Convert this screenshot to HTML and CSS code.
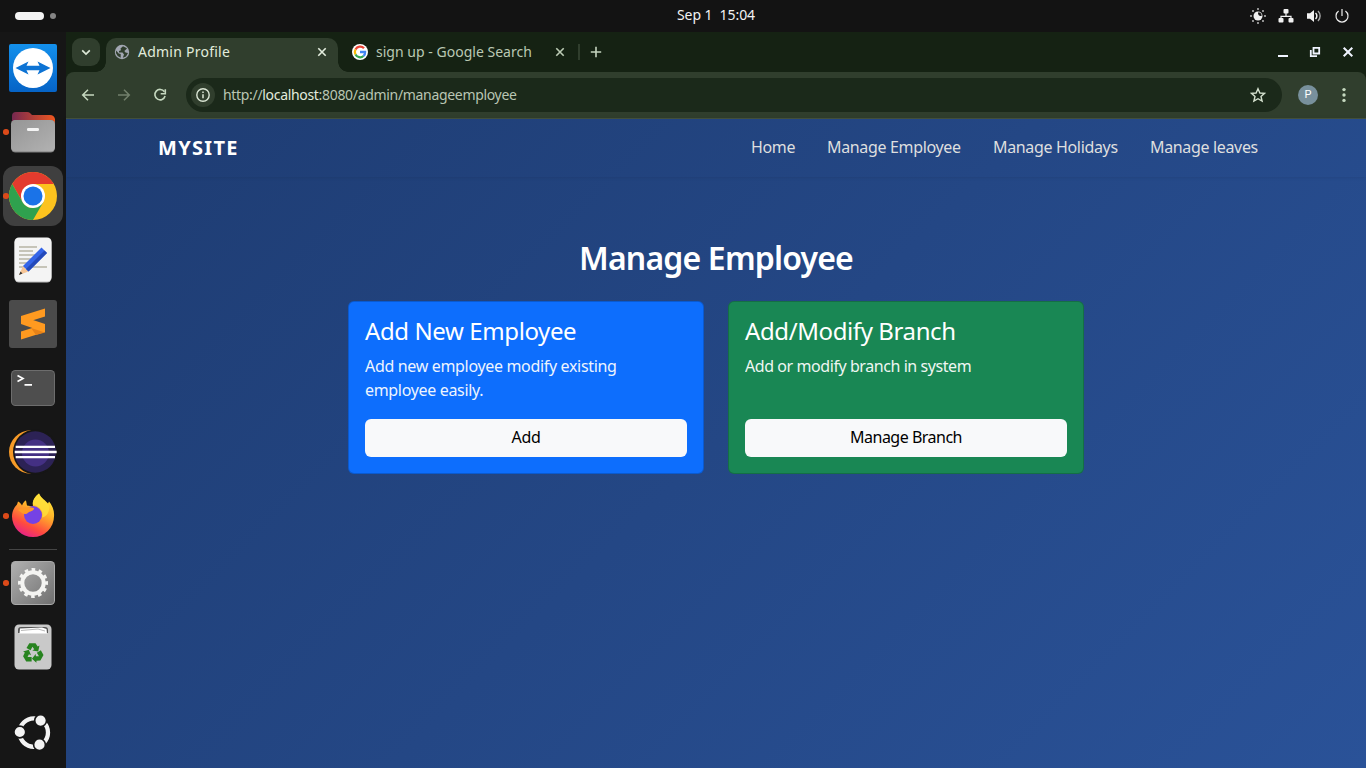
FILE: index.html
```html
<!DOCTYPE html>
<html lang="en">
<head>
<meta charset="utf-8">
<title>Admin Profile</title>
<link rel="stylesheet" href="styles.css">
</head>
<body>
<header class="topbar">
  <div class="workspaces"><span class="pill"></span><span class="ws-dot"></span></div>
  <div class="clock">Sep 1&nbsp; 15:04</div>
  <div class="status">
    <svg width="16" height="16" viewBox="0 0 16 16"><circle cx="8" cy="8" r="4.500" fill="#f0f0f0"/><path d="M8.300 4.300a2.600 2.600 0 0 0 3.400 3.500A3.800 3.800 0 0 0 8.300 4.300Z" fill="#131313"/><g fill="#ccc"><circle cx="8" cy="1" r=".9"/><circle cx="8" cy="15" r=".9"/><circle cx="1" cy="8" r=".9"/><circle cx="15" cy="8" r=".9"/><circle cx="3" cy="3" r=".9"/><circle cx="13" cy="3" r=".9"/><circle cx="3" cy="13" r=".9"/><circle cx="13" cy="13" r=".9"/></g></svg>
    <svg width="16" height="16" viewBox="0 0 16 16"><g fill="#f2f2f2"><rect x="5.500" y="1" width="5" height="4.500" rx="1"/><rect x=".5" y="10" width="5" height="4.500" rx="1"/><rect x="10.500" y="10" width="5" height="4.500" rx="1"/></g><path d="M8 5v3.300M3 10.500V8.300h10v2.200" fill="none" stroke="#f2f2f2" stroke-width="1.200"/></svg>
    <svg width="16" height="16" viewBox="0 0 16 16"><path d="M1 5.300h3L8 2v12L4 10.700H1Z" fill="#f2f2f2"/><path d="M9.500 5a4 4 0 0 1 0 6" fill="none" stroke="#f2f2f2" stroke-width="1.500"/><path d="M12 3a7 7 0 0 1 0 10" fill="none" stroke="#aaa" stroke-width="1.400"/></svg>
    <svg width="16" height="16" viewBox="0 0 16 16"><path d="M4.600 3.100a6 6 0 1 0 6.800 0M8 1v7" fill="none" stroke="#eee" stroke-width="1.200"/></svg>
  </div>
</header>
<div class="desktop">
  <aside class="dock">
    <div class="app"><svg width="48" height="48" viewBox="0 0 48 48"><defs><linearGradient id="tv" x2="0" y2="1"><stop stop-color="#1390ec"/><stop offset="1" stop-color="#0663c6"/></linearGradient></defs><rect width="48" height="48" rx="2" fill="url(#tv)"/><circle cx="24" cy="24" r="20" fill="#fff"/><path d="M6.500 24l13-6.500-2 4.300h13l-2-4.300 13 6.500-13 6.500 2-4.300h-13l2 4.300Z" fill="#0d73d4"/></svg></div>
    <div class="app"><i class="running"></i><svg width="48" height="48" viewBox="0 0 48 48"><defs><linearGradient id="ff" x2="1"><stop stop-color="#762850"/><stop offset="1" stop-color="#ef5720"/></linearGradient><linearGradient id="gr" x2="1" y2="1"><stop stop-color="#959595"/><stop offset="1" stop-color="#b2b2b2"/></linearGradient></defs><path d="M3 18V8q0-4 4-4h11q2 0 3 1l2 2h18q4 0 5 4v7Z" fill="url(#ff)"/><rect x="2" y="12" width="44" height="32.500" rx="4.500" fill="#7d7d7d"/><rect x="2" y="12" width="44" height="31.500" rx="4.500" fill="url(#gr)"/><rect x="18" y="20" width="12" height="3" rx="1.300" fill="#f4f4f4"/></svg></div>
    <div class="app active"><i class="running"></i><svg width="48" height="48" viewBox="0 0 48 48"><circle cx="24" cy="24" r="24" fill="#fcc31e"/><path d="M24 24L13.600 30 3.220 12A24 24 0 0 1 44.780 12H24Z" fill="#e33b2e"/><path d="M3.220 12L13.600 30A12 12 0 0 0 24 36L34.400 30 24 48A24 24 0 0 1 3.220 12Z" fill="#2fa14e"/><circle cx="24" cy="24" r="12" fill="#fff"/><circle cx="24" cy="24" r="9.500" fill="#1a73e8"/></svg></div>
    <div class="app"><svg width="48" height="48" viewBox="0 0 48 48"><rect x="5.500" y="2" width="37" height="44.500" rx="4.500" fill="#bdbdbd"/><rect x="5.500" y="1.500" width="37" height="44" rx="4.500" fill="#f4f4f4"/><path d="M10 11h18M10 15h14M10 19h18M10 23h15M10 27h13M10 31h28" stroke="#c6c4b8" stroke-width="2"/><path d="M10 39l4-9 5.500 5.500Z" fill="#f6c596"/><path d="M10 39l1.500-3.500 2 2Z" fill="#333"/><path d="M14 30L32.500 11.500l5.500 5.500L19.500 35.500Z" fill="#3465e8"/><path d="M17 33L35.500 14.500 38 17 19.500 35.500Z" fill="#2349b9"/></svg></div>
    <div class="app"><svg width="48" height="48" viewBox="0 0 48 48"><rect width="48" height="48" rx="3" fill="#4b4b4b"/><path d="M12 31.500L36 24v8L12 39.500Z" fill="#ff9a20"/><path d="M12 16v8l24 8.500V24Z" fill="#ff9a20"/><path d="M12 16L36 8.500v8L12 24Z" fill="#ff9a20"/><path d="M22 28l14 4.500-9 2.500Z" fill="#e58118"/></svg></div>
    <div class="app"><svg width="48" height="48" viewBox="0 0 48 48"><rect x="2" y="6" width="44" height="36" rx="4.500" fill="#6d6d6d"/><rect x="3" y="7" width="42" height="34" rx="3.500" fill="#4e4e4e"/><path d="M8.500 11.500l5.500 3-5.500 3M15.500 20.800H23" fill="none" stroke="#fff" stroke-width="1.700"/></svg></div>
    <div class="app"><svg width="48" height="48" viewBox="0 0 48 48"><circle cx="21.700" cy="24" r="21.700" fill="#f79a28"/><circle cx="26.500" cy="24" r="22.500" fill="#161616"/><circle cx="26.300" cy="24" r="20.700" fill="#2c2255"/><circle cx="26.500" cy="25" r="13.500" fill="#443083"/><path d="M6.700 18.800H46M5.700 24h42M6.700 29.100H46" stroke="#fff" stroke-width="2.300"/></svg></div>
    <div class="app"><i class="running"></i><svg width="48" height="48" viewBox="0 0 48 48"><defs><linearGradient id="fx" x1=".8" y1="0" x2=".3" y2="1"><stop stop-color="#fff13b"/><stop offset=".4" stop-color="#ffb029"/><stop offset=".75" stop-color="#ff4b3f"/><stop offset="1" stop-color="#e5208c"/></linearGradient></defs><path d="M30 1.500c2 5 7 7 9 10l1-2c4 5 5.500 10 5 15a21 20.500 0 0 1-42 0c0-5 2-9 5-12l1-3c2 1 3 2 4 4 1-3 3-5 4-5l1 5 6 1c-1-6 2-10 6-13Z" fill="url(#fx)"/><circle cx="24" cy="23" r="9" fill="#7542e5"/><path d="M9 18c4-3 8-2 11-3l5 1c0 3-3 3-5 4-2 2-4 3-7 1Z" fill="#ff9a27"/><path d="M30 1.500c-5 4-7 8-6 11 7 2 11 7 9 13 6-1 8-8 7-12-3-4-8-7-10-12Z" fill="#ffe13b" opacity=".8"/></svg></div>
    <div class="divider"></div>
    <div class="app"><i class="running"></i><svg width="48" height="48" viewBox="0 0 48 48"><defs><linearGradient id="st" x2="1" y2="1"><stop stop-color="#b0b0b0"/><stop offset="1" stop-color="#707070"/></linearGradient></defs><rect x="2" y="2" width="44" height="44" rx="4.500" fill="#aaa"/><rect x="3" y="3" width="42" height="42" rx="3.500" fill="url(#st)"/><circle cx="24" cy="24" r="13.300" fill="none" stroke="#f4f4f2" stroke-width="3.400" stroke-dasharray="3.482" transform="rotate(-7.500 24 24)"/><circle cx="24" cy="24" r="10.700" fill="none" stroke="#f4f4f2" stroke-width="4"/></svg></div>
    <div class="app"><svg width="48" height="48" viewBox="0 0 48 48"><rect x="5.500" y="1.500" width="37" height="45" rx="4.500" fill="#c9c9c9"/><path d="M9 10V7q0-3 3-3h24q3 0 3 3v3Z" fill="#555"/><path d="M10.500 10.500l.5-5 22-1 4.500 1.500.5 4.500Z" fill="#fff"/><path d="M12 7.500l17-1.500 7 2" fill="none" stroke="#999" stroke-width=".7"/><g fill="#27831f"><path d="M17.500 25l2.800-4.700h6.200l2.200 3.300 1.800-1-1.300 5.900-5.900-.9 1.900-1.300-1.700-2.600-2 3.600Z"/><path d="M17.500 25l2.800-4.700h6.200l2.200 3.300 1.800-1-1.300 5.900-5.900-.9 1.900-1.300-1.700-2.600-2 3.600Z" transform="rotate(120 24 30.300)"/><path d="M17.500 25l2.800-4.700h6.200l2.200 3.300 1.800-1-1.300 5.900-5.900-.9 1.900-1.300-1.700-2.600-2 3.600Z" transform="rotate(240 24 30.300)"/></g></svg></div>
    <div class="launcher"><svg width="48" height="48" viewBox="0 0 48 48"><circle cx="24.800" cy="23.600" r="14.200" fill="none" stroke="#f3f3f3" stroke-width="4.300"/><g fill="#f3f3f3" stroke="#161616" stroke-width="1.600"><circle cx="10.800" cy="23" r="5.900"/><circle cx="31.600" cy="11.600" r="5.900"/><circle cx="30.500" cy="35.700" r="5.900"/></g></svg></div>
  </aside>
  <main class="browser">
    <div class="tabs">
      <button class="tab-search"><svg width="12" height="12" viewBox="0 0 12 12"><path d="M2.200 4.300L6 8l3.800-3.700" fill="none" stroke="#dde8d7" stroke-width="1.700"/></svg></button>
      <div class="tab current">
        <svg width="16" height="16" viewBox="0 0 16 16"><circle cx="8" cy="8" r="7.200" fill="#a2a7b2"/><path d="M9 2.200L6.500 4.500l.5 1.800-2 .7v1.500h3.500l1.500 2-1.200 3.200 3.200-1.200 2-3.500-2.500-.500L10.300 7l1.700-1.500 1-1.300ZM2.200 6.500l2.500 3 2 .5v3.800l-3-1.800-1.800-3Z" fill="#303e2d"/></svg>
        <span class="tab-title wide">Admin Profile</span>
        <svg class="close" width="10" height="10" viewBox="0 0 10 10"><path d="M1.300 1.300l7.400 7.400M8.700 1.300L1.300 8.700" stroke="#e4eedf" stroke-width="1.600"/></svg>
      </div>
      <div class="tab other">
        <svg width="16" height="16" viewBox="0 0 16 16"><circle cx="8" cy="8" r="8" fill="#fff"/><g fill="none" stroke-width="2.300"><path d="M12 4.300A5.200 5.200 0 0 0 3.500 5.500" stroke="#ea4335"/><path d="M3.500 5.500a5.200 5.200 0 0 0 0 5" stroke="#fbbc05"/><path d="M3.500 10.500A5.200 5.200 0 0 0 11.500 12" stroke="#34a853"/><path d="M11.500 12A5 5 0 0 0 13.100 8H8" stroke="#4285f4"/></g></svg>
        <span class="tab-title">sign up - Google Search</span>
        <svg class="close" width="10" height="10" viewBox="0 0 10 10"><path d="M1.300 1.300l7.400 7.400M8.700 1.300L1.300 8.700" stroke="#bccbb5" stroke-width="1.600"/></svg>
      </div>
      <span class="tab-sep"></span>
      <svg class="plus" width="12" height="12" viewBox="0 0 12 12"><path d="M6 .800v10.400M.800 6h10.400" stroke="#c4d3be" stroke-width="1.600"/></svg>
      <div class="window-controls">
        <svg width="12" height="12" viewBox="0 0 12 12"><path d="M2 10h10" stroke="#f0f4ff" stroke-width="2"/></svg>
        <svg width="12" height="12" viewBox="0 0 12 12"><path d="M4.500 1.800h5.700v5.700H4.500ZM1.800 4v6.200H8" fill="none" stroke="#f0f4ff" stroke-width="1.800"/></svg>
        <svg width="12" height="12" viewBox="0 0 12 12"><path d="M1.700 1.700l8.600 8.600M10.300 1.700l-8.600 8.600" stroke="#f0f4ff" stroke-width="2"/></svg>
      </div>
    </div>
    <div class="toolbar">
      <div class="nav-icons">
        <svg width="16" height="16" viewBox="0 0 16 16"><path d="M14 8H3M8 2.700L2.700 8 8 13.300" fill="none" stroke="#c5d8bf" stroke-width="1.500"/></svg>
        <svg width="16" height="16" viewBox="0 0 16 16"><path d="M2 8h11M8 2.700L13.300 8 8 13.300" fill="none" stroke="#72806c" stroke-width="1.500"/></svg>
        <svg width="16" height="16" viewBox="0 0 16 16"><path d="M12.400 4.700A5.200 5.200 0 1 0 13.100 9" fill="none" stroke="#c5d8bf" stroke-width="1.600"/><path d="M13.300 2.200v4.600H8.700" fill="none" stroke="#c5d8bf" stroke-width="1.600"/></svg>
      </div>
      <div class="omnibox">
        <span class="info"><svg width="16" height="16" viewBox="0 0 16 16"><circle cx="8" cy="8" r="6.200" fill="none" stroke="#dbe6d5" stroke-width="1.400"/><path d="M8 7.200v4M8 4.500v1.500" stroke="#dbe6d5" stroke-width="1.500"/></svg></span>
        <span class="url">http://<b>localhost</b>:8080/admin/manageemployee</span>
        <svg width="16" height="16" viewBox="0 0 16 16"><path d="M8 1.700l1.900 4.300 4.700.4-3.600 3.100 1.100 4.600L8 11.700l-4.100 2.400L5 9.500 1.400 6.400l4.700-.4Z" fill="none" stroke="#d5e1cf" stroke-width="1.400"/></svg>
      </div>
      <span class="avatar">P</span>
      <svg class="kebab" width="4" height="16" viewBox="0 0 4 16"><g fill="#c5d8bf"><circle cx="2" cy="2.600" r="1.700"/><circle cx="2" cy="8" r="1.700"/><circle cx="2" cy="13.400" r="1.700"/></g></svg>
    </div>
    <div class="page">
      <nav class="navbar">
        <span class="brand">MYSITE</span>
        <div class="links"><a class="l-home">Home</a><a class="l-employee">Manage Employee</a><a class="l-holidays">Manage Holidays</a><a class="l-leaves">Manage leaves</a></div>
      </nav>
      <h1>Manage Employee</h1>
      <div class="cards">
        <section class="card blue"><h2>Add New Employee</h2><p>Add new employee modify existing<br>employee easily.</p><button class="btn">Add</button></section>
        <section class="card green"><h2>Add/Modify Branch</h2><p>Add or modify branch in system</p><button class="btn branch">Manage Branch</button></section>
      </div>
    </div>
  </main>
</div>
</body>
</html>
```

FILE: styles.css
```css
* { box-sizing: border-box; }
body { margin: 0; width: 1366px; height: 768px; overflow: hidden; background: #161616; font-family: "Noto Sans", "Open Sans", sans-serif; white-space: nowrap; }
svg { display: block; flex: none; }
button { border: 0; padding: 0; font-family: inherit; }

.topbar { height: 32px; background: #131313; display: grid; grid-template-columns: 662px 108px 1fr; align-items: center; color: #f2f2f2; }
.workspaces { display: flex; align-items: center; gap: 6px; padding-left: 15px; }
.pill { width: 29px; height: 8px; border-radius: 4px; background: #f4f4f4; }
.ws-dot { width: 6px; height: 6px; border-radius: 50%; background: #858585; }
.clock { font-size: 14px; letter-spacing: -.07px; text-align: center; line-height: 30px; padding-bottom: 2px; }
.status { display: flex; gap: 12px; justify-content: flex-end; padding-right: 16px; }

.desktop { display: flex; height: 736px; }
.dock { width: 66px; display: flex; flex-direction: column; padding-top: 4px; background: #161616; }
.app { position: relative; height: 64px; flex: none; display: flex; align-items: center; justify-content: center; }
.app.active { background: #3f3f3f; height: 60px; margin: 2px 3px; border-radius: 12px; }
.running { position: absolute; left: 3px; top: calc(50% - 3px); width: 5.5px; height: 5.5px; border-radius: 50%; background: #dc4a19; }
.active .running { left: 0; }
.divider { height: 1px; margin: 1px 9px; background: #454545; flex: none; }
.launcher { margin-top: auto; padding: 0 9px 11px; }

.browser { flex: 1; display: flex; flex-direction: column; background: #152213; }
.tabs { height: 40px; display: flex; align-items: center; padding: 6px 12px 0 6px; }
.tab-search { width: 28px; height: 28px; border-radius: 9px; background: #303e2d; display: flex; align-items: center; justify-content: center; margin: -6px 6px 0 0; }
.tab { display: flex; align-items: center; height: 34px; padding-bottom: 6px; }
.tab.current { position: relative; width: 232px; background: #303e2d; border-radius: 10px 10px 0 0; padding-left: 8px; padding-right: 11px; color: #e1ecdc; }
.tab.current::before, .tab.current::after { content: ""; position: absolute; bottom: 0; width: 10px; height: 10px; }
.tab.current::before { left: -10px; background: radial-gradient(circle at 0 0, transparent 9.5px, #303e2d 10px); }
.tab.current::after { right: -10px; background: radial-gradient(circle at 100% 0, transparent 9.5px, #303e2d 10px); }
.tab.other { width: 227px; padding-left: 14px; color: #bac9b3; }
.tab-title { font-size: 14px; margin-left: 8px; line-height: 20px; letter-spacing: .02px; }
.tab-title.wide { letter-spacing: .24px; }
.close { margin-left: auto; }
.tab-sep { width: 2px; height: 16px; margin: -6px 0 0 13px; background: #303e2d; }
.plus { margin: -6px 0 0 10px; }
.window-controls { display: flex; gap: 21px; margin: -6px 0 0 auto; }

.toolbar { height: 47px; background: #303e2d; border-radius: 8px 8px 0 0; display: flex; align-items: center; padding: 0 20px 0 14px; border-bottom: 1px solid #46533f; }
.nav-icons { display: flex; gap: 20px; margin-right: 18px; }
.omnibox { width: 1096px; height: 34px; border-radius: 17px; background: #1b291a; display: flex; align-items: center; padding: 0 16px 0 5px; }
.info { width: 24px; height: 24px; border-radius: 50%; background: #303e2d; display: flex; align-items: center; justify-content: center; }
.url { margin: 0 auto 0 8px; padding-bottom: 2px; font-size: 14px; letter-spacing: -.32px; color: #b9c5b3; }
.url b { font-weight: 400; color: #e2ecde; }
.avatar { width: 20px; height: 20px; border-radius: 50%; background: #78909c; color: #fff; font: 11px/20px Roboto, sans-serif; text-align: center; margin: 0 24px 0 16px; }
.kebab { margin: 0 -2px 0 0; }

.page { flex: 1; background: linear-gradient(135deg, #1e3c72, #2a5298); color: #fff; }
.navbar { height: 58px; padding: 0 108px 2px 92px; display: flex; align-items: center; justify-content: space-between; box-shadow: 0 0 4px rgba(0, 0, 0, .12); }
.brand { font-size: 20px; font-weight: 700; letter-spacing: 1.3px; line-height: 30px; padding-top: 2px; }
.links { display: flex; gap: 32px; font-size: 16px; line-height: 24px; letter-spacing: -.34px; color: #dedfdf; }
.l-home { width: 44px; }
.l-employee { width: 134px; }
.l-holidays { width: 125px; }
.l-leaves { width: 108px; }
h1 { margin: 61px 0 24px; font-size: 32px; line-height: 39px; font-weight: 600; letter-spacing: -.83px; text-align: center; }
.cards { width: 736px; margin: 0 auto; display: grid; grid-template-columns: 1fr 1fr; gap: 24px; }
.card { height: 172.5px; border: 1px solid rgba(0, 0, 0, .175); border-radius: 6px; padding: 16px; display: flex; flex-direction: column; }
.blue { background: #0d6efd; }
.green { background: #198754; }
h2 { margin: -1px 0 9px; font-size: 24px; font-weight: 450; line-height: 28px; letter-spacing: -.4px; }
.card p { margin: 0; font-size: 16px; line-height: 24px; letter-spacing: -.33px; opacity: .93; }
.green p { letter-spacing: -.43px; }
.btn { margin-top: auto; height: 38px; padding-bottom: 2px; border-radius: 6px; background: #f8f9fa; color: #000; font-size: 16px; letter-spacing: -.3px; }
.branch { letter-spacing: -.5px; }
```
